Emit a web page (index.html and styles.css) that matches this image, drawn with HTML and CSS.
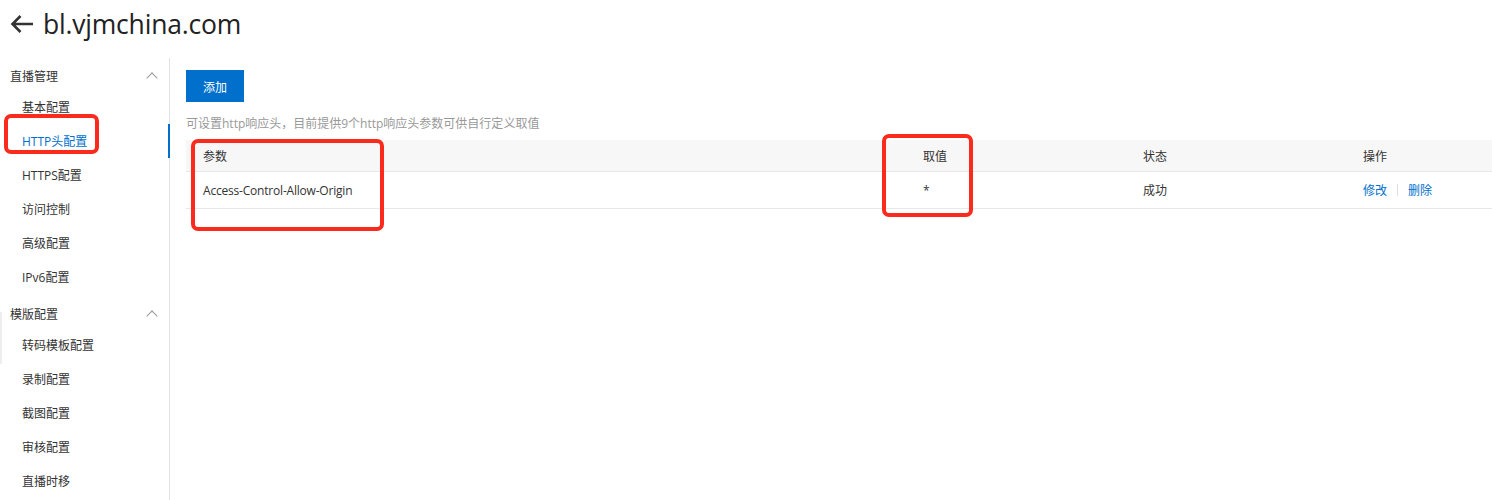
FILE: index.html
```html
<!DOCTYPE html>
<html lang="zh-CN">
<head>
  <meta charset="UTF-8">
  <title>bl.vjmchina.com</title>
  <meta name="viewport" content="width=device-width, initial-scale=1.0">
  <link rel="stylesheet" href="styles.css">
</head>
<body>
  <header class="top">
    <a class="back" href="#">
      <svg width="24" height="20" viewBox="0 0 24 20"><path d="M10.5 2 L2.5 10 L10.5 18 M2.5 10 H23" fill="none" stroke="#333" stroke-width="2.6"/></svg>
    </a>
    <h1>bl.vjmchina.com</h1>
  </header>
  <div class="layout">
    <nav class="sidebar">
      <div class="nav-group">
        <div class="group-title">直播管理<span class="chevron"></span></div>
        <a class="nav-item" href="#">基本配置</a>
        <a class="nav-item active" href="#">HTTP头配置</a>
        <a class="nav-item" href="#">HTTPS配置</a>
        <a class="nav-item" href="#">访问控制</a>
        <a class="nav-item" href="#">高级配置</a>
        <a class="nav-item" href="#">IPv6配置</a>
      </div>
      <div class="nav-group">
        <div class="group-title">模版配置<span class="chevron"></span></div>
        <a class="nav-item edge" href="#">转码模板配置</a>
        <a class="nav-item" href="#">录制配置</a>
        <a class="nav-item" href="#">截图配置</a>
        <a class="nav-item" href="#">审核配置</a>
        <a class="nav-item" href="#">直播时移</a>
      </div>
    </nav>
    <main class="content">
      <button class="btn-primary" type="button">添加</button>
      <p class="desc">可设置http响应头，目前提供9个http响应头参数可供自行定义取值</p>
      <div class="table">
        <div class="row head">
          <div class="cell">参数</div>
          <div class="cell">取值</div>
          <div class="cell">状态</div>
          <div class="cell">操作</div>
        </div>
        <div class="row">
          <div class="cell latin">Access-Control-Allow-Origin</div>
          <div class="cell">*</div>
          <div class="cell">成功</div>
          <div class="cell actions"><a href="#">修改</a><span class="sep"></span><a href="#">删除</a></div>
        </div>
      </div>
    </main>
  </div>
  <!-- red annotation boxes drawn over the screenshot -->
  <div class="mark mark-nav"></div>
  <div class="mark mark-param"></div>
  <div class="mark mark-value"></div>
</body>
</html>
```

FILE: styles.css
```css
body {
  margin: 0;
  background: #fff;
  color: #333;
  font-family: 'Open Sans', 'Noto Sans CJK SC', sans-serif;
  font-size: 12px;
  position: relative;
  min-height: 500px;
}
a {
  text-decoration: none;
}
.top {
  height: 48px;
  display: flex;
  align-items: center;
  padding-left: 10px;
  gap: 9px;
}
.back {
  display: flex;
}
.top h1 {
  margin: 0;
  font-family: 'Open Sans', sans-serif;
  font-weight: 400;
  font-size: 26.5px;
  color: #222;
  letter-spacing: -0.2px;
}
.layout {
  display: flex;
  margin-top: 10px;
  min-height: 442px;
}
.sidebar {
  width: 169px;
  border-right: 1px solid #e2e2e2;
  padding-top: 4px;
}
.nav-group + .nav-group {
  margin-top: 6px;
}
.group-title {
  height: 28px;
  display: flex;
  align-items: center;
  justify-content: space-between;
  padding: 0 12px 0 10px;
  color: #333;
}
.chevron {
  width: 7px;
  height: 7px;
  border-left: 1px solid #999;
  border-top: 1px solid #999;
  transform: rotate(45deg);
  margin-top: 4px;
  margin-right: 1px;
}
.nav-item {
  display: flex;
  align-items: center;
  height: 34px;
  padding-left: 22px;
  color: #333;
  position: relative;
}
.nav-item.active {
  color: #0070cc;
}
.nav-item.active::after {
  content: "";
  position: absolute;
  right: -1px;
  top: 0;
  width: 2px;
  height: 34px;
  background: #0070cc;
}
.nav-item.edge::before {
  content: "";
  position: absolute;
  left: 0;
  top: -16px;
  width: 2px;
  height: 52px;
  background: #eee;
}
.content {
  flex: 1;
  padding: 12px 0 0 16px;
}
.btn-primary {
  display: block;
  width: 58px;
  height: 32px;
  border: none;
  background: #0070cc;
  color: #fff;
  font-family: 'Noto Sans CJK SC', sans-serif;
  font-size: 12px;
  padding: 0;
  cursor: pointer;
}
.desc {
  margin: 13px 0 0 0;
  line-height: 18px;
  color: #999;
}
.table {
  margin-top: 7px;
}
.row {
  display: grid;
  grid-template-columns: 720px 220px 220px 1fr;
  height: 36px;
  align-items: center;
  border-bottom: 1px solid #e8e8e8;
}
.row.head {
  height: 31px;
  background: #f7f7f7;
}
.cell {
  padding-left: 17px;
}
.cell.latin {
  letter-spacing: -0.2px;
}
.actions {
  display: flex;
  align-items: center;
}
.actions a {
  color: #0070cc;
}
.sep {
  width: 1px;
  height: 12px;
  background: #e0e0e0;
  margin: 0 10px;
}
.mark {
  position: absolute;
  border: 4px solid #fa2a1d;
  border-radius: 7px;
  box-sizing: border-box;
}
.mark-nav {
  left: 4px;
  top: 114px;
  width: 95px;
  height: 40px;
}
.mark-param {
  left: 191px;
  top: 139px;
  width: 193px;
  height: 92px;
}
.mark-value {
  left: 882px;
  top: 134px;
  width: 91px;
  height: 83px;
}
```
